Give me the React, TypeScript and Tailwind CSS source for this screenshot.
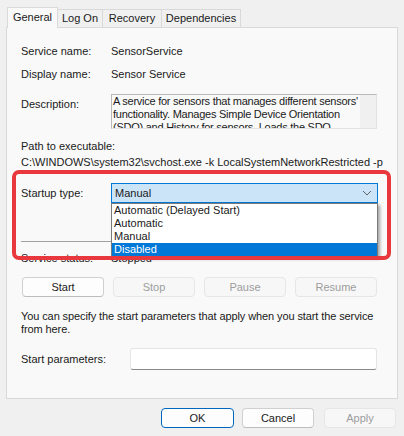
const tabs = [
  { name: "General", w: "w-[51px]", active: true },
  { name: "Log On", w: "w-[45px]", active: false },
  { name: "Recovery", w: "w-[59px]", active: false },
  { name: "Dependencies", w: "w-[79px]", active: false },
];

const startupOptions = ["Automatic (Delayed Start)", "Automatic", "Manual", "Disabled"];

function Chevron() {
  return (
    <svg width="10" height="6" viewBox="0 0 10 6" fill="none">
      <path d="M1 1 L5 5 L9 1" stroke="#606060" strokeWidth="1" />
    </svg>
  );
}

export default function App() {
  return (
    <div className="relative w-[404px] h-[436px] overflow-hidden bg-[#f0f0f0] font-['Liberation_Sans',sans-serif] text-[11px] leading-[13px] text-[#1a1a1a]">
      {/* tab strip */}
      <div className="relative z-10 flex h-[28px] items-end pl-[7px]">
        {tabs.map((tab) =>
          tab.active ? (
            <div
              key={tab.name}
              className={`${tab.w} flex h-[21px] items-center justify-center border border-b-0 border-[#d9d9d9] bg-[#f9f9f9] pb-[2px]`}
            >
              {tab.name}
            </div>
          ) : (
            <div
              key={tab.name}
              className={`${tab.w} mb-px flex h-[18px] items-center justify-center border border-b-0 border-l-0 border-[#d9d9d9] bg-[#f0f0f0]`}
            >
              {tab.name}
            </div>
          )
        )}
      </div>

      {/* property page */}
      <div className="mx-[6px] -mt-px h-[372px] border border-[#d9d9d9] bg-[#f9f9f9] px-[14px]">
        <div className="mt-[17px] flex">
          <span className="w-[90px]">Service name:</span>
          <span>SensorService</span>
        </div>
        <div className="mt-[10px] flex">
          <span className="w-[90px]">Display name:</span>
          <span>Sensor Service</span>
        </div>
        <div className="mt-[13px] flex">
          <span className="mt-[4px] w-[90px]">Description:</span>
          <div className="flex h-[35px] w-[266px] overflow-hidden border border-[#b9b9b9] border-r-[#e3e3e3] border-b-[#e3e3e3] bg-[#f9f9f9]">
            <div className="flex-1 overflow-hidden whitespace-nowrap pl-px tracking-[-0.25px]">
              A service for sensors that manages different sensors'
              <br />
              functionality. Manages Simple Device Orientation
              <br />
              (SDO) and History for sensors. Loads the SDO
            </div>
            <div className="w-[16px] bg-[#f0f0f0]" />
          </div>
        </div>
        <div className="mt-[11px]">Path to executable:</div>
        <div className="mt-[3px] whitespace-nowrap">
          C:\WINDOWS\system32\svchost.exe -k LocalSystemNetworkRestricted -p
        </div>

        {/* startup type */}
        <div className="mt-[14px] flex items-center">
          <span className="w-[90px]">Startup type:</span>
          <div className="relative">
            <div className="flex h-[20px] w-[267px] items-center justify-between border border-[#0078d7] bg-[#cce4f7] pl-[3px] pr-[5px]">
              <span>Manual</span>
              <Chevron />
            </div>
            <div className="absolute left-0 top-[20px] z-10 w-[267px] border border-[#7a7a7a] bg-white shadow-[2px_2px_3px_rgba(0,0,0,0.35)]">
              {startupOptions.map((opt) => (
                <div
                  key={opt}
                  className={
                    opt === "Disabled"
                      ? "h-[13px] bg-[#0078d7] pl-[2px] text-white"
                      : "h-[13px] pl-[2px]"
                  }
                >
                  {opt}
                </div>
              ))}
            </div>
          </div>
        </div>

        <div className="mt-[38px] h-px w-[355px] bg-[#a0a0a0]" />
        <div className="mt-[10px] flex">
          <span className="w-[90px]">Service status:</span>
          <span>Stopped</span>
        </div>

        <div className="mt-[12px] ml-px grid w-[355px] grid-cols-4 gap-[9px]">
          <button className="h-[20px] rounded-[4px] border border-[#d0d0d0] border-b-[#bdbdbd] bg-[#fdfdfd]">
            Start
          </button>
          <button className="h-[20px] rounded-[4px] border border-[#e6e6e6] bg-[#f7f7f7] text-[#9d9d9d]">
            Stop
          </button>
          <button className="h-[20px] rounded-[4px] border border-[#e6e6e6] bg-[#f7f7f7] text-[#9d9d9d]">
            Pause
          </button>
          <button className="h-[20px] rounded-[4px] border border-[#e6e6e6] bg-[#f7f7f7] text-[#9d9d9d]">
            Resume
          </button>
        </div>

        <p className="mt-[13px] whitespace-nowrap tracking-[-0.1px]">
          You can specify the start parameters that apply when you start the service
          <br />
          from here.
        </p>

        <div className="mt-[12px] flex items-center">
          <span className="w-[109px]">Start parameters:</span>
          <div className="h-[22px] w-[247px] rounded-[3px] border border-[#e5e5e5] border-b-[#8a8a8a] bg-white" />
        </div>
      </div>

      {/* dialog buttons */}
      <div className="flex justify-end pr-[8px] pt-[9px]">
        <button className="h-[20px] w-[73px] rounded-[4px] border border-[#0067c0] bg-[#fdfdfd]">
          OK
        </button>
        <button className="ml-[8px] h-[20px] w-[72px] rounded-[4px] border border-[#d0d0d0] border-b-[#bdbdbd] bg-[#fdfdfd]">
          Cancel
        </button>
        <button className="ml-[10px] h-[20px] w-[72px] rounded-[4px] border border-[#e6e6e6] bg-[#f7f7f7] text-[#9d9d9d]">
          Apply
        </button>
      </div>

      {/* red highlight annotation */}
      <div className="pointer-events-none absolute left-[12px] top-[170px] z-20 h-[90px] w-[379px] rounded-[7px] border-4 border-[#e8383d]" />
    </div>
  );
}
